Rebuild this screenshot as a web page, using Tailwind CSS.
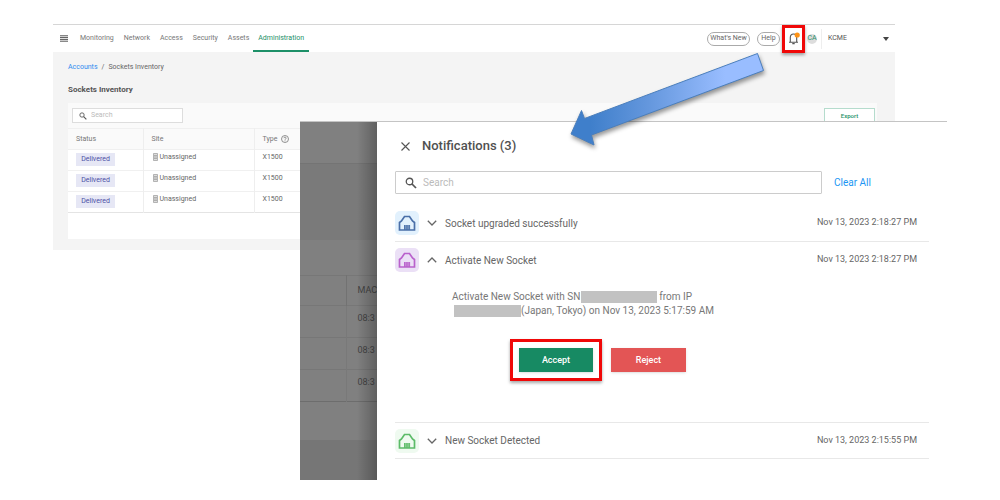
<!DOCTYPE html>
<html lang="en">
<head>
<meta charset="utf-8">
<title>Sockets Inventory</title>
<script src="https://cdn.jsdelivr.net/npm/@tailwindcss/browser@4"></script>
</head>
<body class="bg-white font-['Roboto',sans-serif] text-[#666]">
<svg class="hidden">
  <symbol id="search" viewBox="0 0 24 24"><circle cx="9" cy="9" r="6.5" fill="none" stroke="currentColor" stroke-width="2.6"/><path d="M14 14l8 8" stroke="currentColor" stroke-width="3.4"/></symbol>
  <symbol id="socket" viewBox="0 0 18 18"><path d="M1.500 16V8.500L3.500 7l3-4.500h5l3 4.500 2 1.500V16z" fill="none" stroke="currentColor" stroke-width="1.7"/><path d="M6 16v-5h6v5z" fill="currentColor" fill-opacity=".6"/><path d="M6.500 16v-5M8.200 16v-5M9.900 16v-5M11.600 16v-5" stroke="currentColor" stroke-width=".9"/></symbol>
  <symbol id="chevron" viewBox="0 0 10 6"><path d="M.8.8L5 5 9.200.8" fill="none" stroke="currentColor" stroke-width="1.3"/></symbol>
  <symbol id="device" viewBox="0 0 5 8"><path d="M.5.5h4v7h-4zM1 2.500h3M1 4h3M1 5.500h3" fill="#ddd" stroke="#999" stroke-width=".7"/></symbol>
</svg>
<main class="relative min-h-screen overflow-hidden pt-6">

  <section class="mr-[105px] ml-[53px] bg-[#f4f4f4]">
    <header class="flex h-7 items-center border-t border-[#d6d6d6] bg-white pr-[6px] pl-[7px] text-[7px]">
      <button class="mr-3 text-[#555]" aria-label="Menu"><svg class="h-[7px] w-2" viewBox="0 0 8 7"><path d="M0 .8h8M0 2.600h8M0 4.400h8M0 6.200h8" stroke="currentColor" stroke-width="1"/></svg></button>
      <nav class="flex h-full gap-[10px] self-stretch text-[#777]">
        <a href="#" class="flex items-center">Monitoring</a>
        <a href="#" class="flex items-center">Network</a>
        <a href="#" class="flex items-center">Access</a>
        <a href="#" class="flex items-center">Security</a>
        <a href="#" class="flex items-center">Assets</a>
        <a href="#" class="-mx-[6px] flex items-center border-b-2 border-[#1d9068] px-[5px] pt-[2px] text-[#1d9068]">Administration</a>
      </nav>
      <div class="ml-auto flex items-center">
        <button class="mr-[7px] h-[14px] w-[43px] rounded-full border border-[#aaa]">What's New</button>
        <button class="mr-[2px] h-[14px] w-[23px] rounded-full border border-[#aaa]">Help</button>
        <button class="mr-[2px] flex h-7 w-[23px] items-center justify-center border-3 border-[#f00808] bg-white shadow-[0_2px_3px_rgba(0,0,0,0.35)]" aria-label="Notifications">
          <svg class="h-[13px] w-3" viewBox="0 0 12 13"><path d="M1 10.300h9M2.300 10V5.600C2.300 3.200 3.600 2 5.500 2s3.200 1.200 3.200 3.600V10M4.300 11.600h2.400" fill="none" stroke="#555" stroke-width="1.1"/><circle cx="9.200" cy="3" r="2.600" fill="#ff9314"/></svg>
        </button>
        <span class="flex size-[10px] items-center justify-center rounded-full bg-[#ddd] text-[7px] text-[#2a8f6c]">CA</span>
        <label class="relative ml-1 flex h-5 items-center border-l border-[#eee] pl-[6px]">
          <select class="w-[61px] appearance-none bg-transparent text-[#555]" aria-label="Account"><option>KCME</option></select>
          <svg class="pointer-events-none absolute right-0 h-1 w-[6px]" viewBox="0 0 6 4"><path d="M0 0h6L3 4z" fill="#444"/></svg>
        </label>
      </div>
    </header>

    <div class="pt-[10px] pr-[18px] pb-[11px] pl-[15px]">
      <div class="flex gap-1 text-[7px] leading-[10px]"><a href="#" class="text-[#2f8bf0]">Accounts</a><span>/</span><span>Sockets Inventory</span></div>
      <h1 class="mt-3 mb-2 text-[8px] leading-[11px] font-bold text-[#555]">Sockets Inventory</h1>
      <div class="bg-white pb-[26px]">
        <div class="flex h-[25px] items-center justify-between bg-[#fafafa] pr-[2px] pl-1">
          <label class="flex h-[15px] w-[111px] items-center gap-1 border border-[#ddd] bg-white pl-[6px]">
            <svg class="size-2 text-[#555]"><use href="#search"/></svg>
            <input class="w-20 text-[7px] leading-[9px] placeholder:text-[#bbb]" placeholder="Search" aria-label="Search sockets">
          </label>
          <button class="h-4 w-[51px] border border-[#b5dccd] bg-white text-[6px] font-medium text-[#1d9068]">Export</button>
        </div>
        <table class="w-full table-fixed border-collapse text-left text-[7px] leading-[9px]">
          <thead><tr class="h-[21px] border-y border-[#f0f0f0] bg-[#fafafa] text-[#777]">
            <th class="w-[75px] border-r border-[#eee] pl-2 font-normal">Status</th>
            <th class="w-[111px] border-r border-[#eee] pl-2 font-normal">Site</th>
            <th class="pl-2 font-normal"><span class="flex items-center gap-1">Type <svg class="size-2" viewBox="0 0 8 8"><circle cx="4" cy="4" r="3.500" fill="none" stroke="#777" stroke-width=".8"/><path d="M2.900 3.200c0-1.500 2.200-1.500 2.200 0C5.100 4 4 4 4 4.800M4 5.400v.8" fill="none" stroke="#777" stroke-width=".8"/></svg></span></th>
          </tr></thead>
          <tbody>
            <tr class="h-[21px] border-b border-[#f0f0f0]"><td class="border-r border-[#eee] pb-px pl-2"><span class="flex h-[13px] w-[39px] items-center justify-center bg-[#e6e7f5] text-[#4b4fa5]">Delivered</span></td><td class="border-r border-[#eee] pb-[6px] pl-[9px]"><span class="flex items-center gap-[2px]"><svg class="h-2 w-[5px]"><use href="#device"/></svg>Unassigned</span></td><td class="pb-[6px] pl-2">X1500</td></tr>
            <tr class="h-[21px] border-b border-[#f0f0f0]"><td class="border-r border-[#eee] pb-px pl-2"><span class="flex h-[13px] w-[39px] items-center justify-center bg-[#e6e7f5] text-[#4b4fa5]">Delivered</span></td><td class="border-r border-[#eee] pb-[6px] pl-[9px]"><span class="flex items-center gap-[2px]"><svg class="h-2 w-[5px]"><use href="#device"/></svg>Unassigned</span></td><td class="pb-[6px] pl-2">X1500</td></tr>
            <tr class="h-[21px] border-b border-[#e4e4e4]"><td class="border-r border-[#eee] pb-px pl-2"><span class="flex h-[13px] w-[39px] items-center justify-center bg-[#e6e7f5] text-[#4b4fa5]">Delivered</span></td><td class="border-r border-[#eee] pb-[6px] pl-[9px]"><span class="flex items-center gap-[2px]"><svg class="h-2 w-[5px]"><use href="#device"/></svg>Unassigned</span></td><td class="pb-[6px] pl-2">X1500</td></tr>
          </tbody>
        </table>
      </div>
    </div>
  </section>

  <section class="relative -mt-[129px] mr-[53px] ml-[300px] flex border-t border-[#c4c4c4] bg-white">
    <div class="relative flex w-[77px] shrink-0 flex-col overflow-hidden bg-[#808080] pt-[41px] text-[9px] text-[#444]">
      <div class="mb-[35px] h-[77px] border-t border-[#747474] bg-[#7a7a7a]"></div>
      <table class="w-full table-fixed border-collapse text-left">
        <thead><tr class="h-[30px] border-y border-[#777]"><th class="w-[46px] border-r border-[#727272]"></th><th class="pl-[11px] font-normal">MAC</th></tr></thead>
        <tbody>
          <tr class="h-8 border-b border-[#777]"><td class="border-r border-[#797979]"></td><td class="pb-[6px] pl-[11px]">08:3</td></tr>
          <tr class="h-8 border-b border-[#777]"><td class="border-r border-[#797979]"></td><td class="pb-[6px] pl-[11px]">08:3</td></tr>
          <tr class="h-8 border-b border-[#6d6d6d]"><td class="border-r border-[#797979]"></td><td class="pb-[6px] pl-[11px]">08:3</td></tr>
        </tbody>
      </table>
      <div class="mt-[38px] min-h-4 grow bg-[#767676]"></div>
      <div class="absolute inset-y-0 right-0 w-5 bg-linear-to-l from-black/25 to-transparent"></div>
    </div>
    <div class="grow pt-[14px] pr-[18px] pb-[21px] pl-[18px]">
      <div class="flex h-5 items-center gap-3 pl-[6px]">
        <button aria-label="Close"><svg class="size-[9px]" viewBox="0 0 9 9"><path d="M.5.5l8 8M8.500.5l-8 8" stroke="#555" stroke-width="1.100"/></svg></button>
        <h2 class="text-[13px] font-medium text-[#505050]">Notifications (3)</h2>
      </div>
      <div class="mt-[15px] flex items-center">
        <label class="flex h-[23px] grow items-center gap-[6px] rounded-[1px] border border-[#ccc] pl-[9px]">
          <svg class="size-3 text-[#555]"><use href="#search"/></svg>
          <input class="grow text-[10px] placeholder:text-[#bbb]" placeholder="Search" aria-label="Search notifications">
        </label>
        <button class="w-[107px] pl-3 text-left text-[10px] text-[#2196f3]">Clear All</button>
      </div>
      <div class="mt-[11px]">
        <div class="flex h-[37px] items-center border-b border-[#e8e8e8] pr-3 text-[10px]">
          <span class="flex size-6 items-center justify-center rounded-[5px] bg-[#e2f1fd] text-[#4a6fa8]"><svg class="size-[18px]"><use href="#socket"/></svg></span>
          <button class="ml-2 flex items-center gap-2"><svg class="h-[6px] w-[10px]"><use href="#chevron"/></svg><span>Socket upgraded successfully</span></button>
          <time class="ml-auto text-[9px]">Nov 13, 2023 2:18:27 PM</time>
        </div>
        <div class="flex h-9 items-center pr-3 text-[10px]">
          <span class="flex size-6 items-center justify-center rounded-[5px] bg-[#ebe0f6] text-[#b961cc]"><svg class="size-[18px]"><use href="#socket"/></svg></span>
          <button class="ml-2 flex items-center gap-2"><svg class="h-[6px] w-[10px] rotate-180"><use href="#chevron"/></svg><span>Activate New Socket</span></button>
          <time class="ml-auto text-[9px]">Nov 13, 2023 2:18:27 PM</time>
        </div>
        <div class="border-b border-[#e8e8e8] pt-3 pb-[41px] pl-[57px] text-[10px] leading-[14px] text-[#777]">
          <p class="flex items-center">Activate New Socket with SN<span class="mr-[2px] ml-px h-3 w-[76px] bg-[#c2c2c2]"></span>from IP</p>
          <p class="flex items-center"><span class="ml-[2px] h-3 w-[67px] bg-[#c2c2c2]"></span>(Japan, Tokyo) on Nov 13, 2023 5:17:59 AM</p>
          <div class="mt-[21px] ml-[58px] flex items-center gap-[9px] font-medium text-white">
            <div class="border-3 border-[#f00808] p-[6px] shadow-[0_2px_3px_rgba(0,0,0,0.35)]"><button class="block h-6 w-[74px] bg-[#178a63] text-[9px] shadow-sm">Accept</button></div>
            <button class="h-6 w-[75px] bg-[#e35555] text-[9px] shadow-sm">Reject</button>
          </div>
        </div>
        <div class="flex h-9 items-center border-b border-[#e8e8e8] pr-3 text-[10px]">
          <span class="flex size-6 items-center justify-center rounded-[5px] bg-[#effaf0] text-[#5cbb68]"><svg class="size-[18px]"><use href="#socket"/></svg></span>
          <button class="ml-2 flex items-center gap-2"><svg class="h-[6px] w-[10px]"><use href="#chevron"/></svg><span>New Socket Detected</span></button>
          <time class="ml-auto text-[9px]">Nov 13, 2023 2:15:55 PM</time>
        </div>
      </div>
    </div>
  </section>

  <svg class="pointer-events-none absolute top-[45px] right-[230px] h-[110px] w-[210px] drop-shadow-[1px_3px_2px_rgba(0,0,0,0.4)]" viewBox="0 0 210 110">
    <defs><linearGradient id="arrow" x1="0" x2="1"><stop offset=".1" stop-color="#3f7fcb"/><stop offset=".4" stop-color="#6497dd"/><stop offset=".8" stop-color="#99bdff"/></linearGradient></defs>
    <path d="M197.500 8.500L203.500 25.500 31.500 90 34 100 11 89 21.500 65.500 24.500 73.500z" fill="url(#arrow)" stroke="#4a7ebb" stroke-width="1"/>
  </svg>
</main>
</body>
</html>
